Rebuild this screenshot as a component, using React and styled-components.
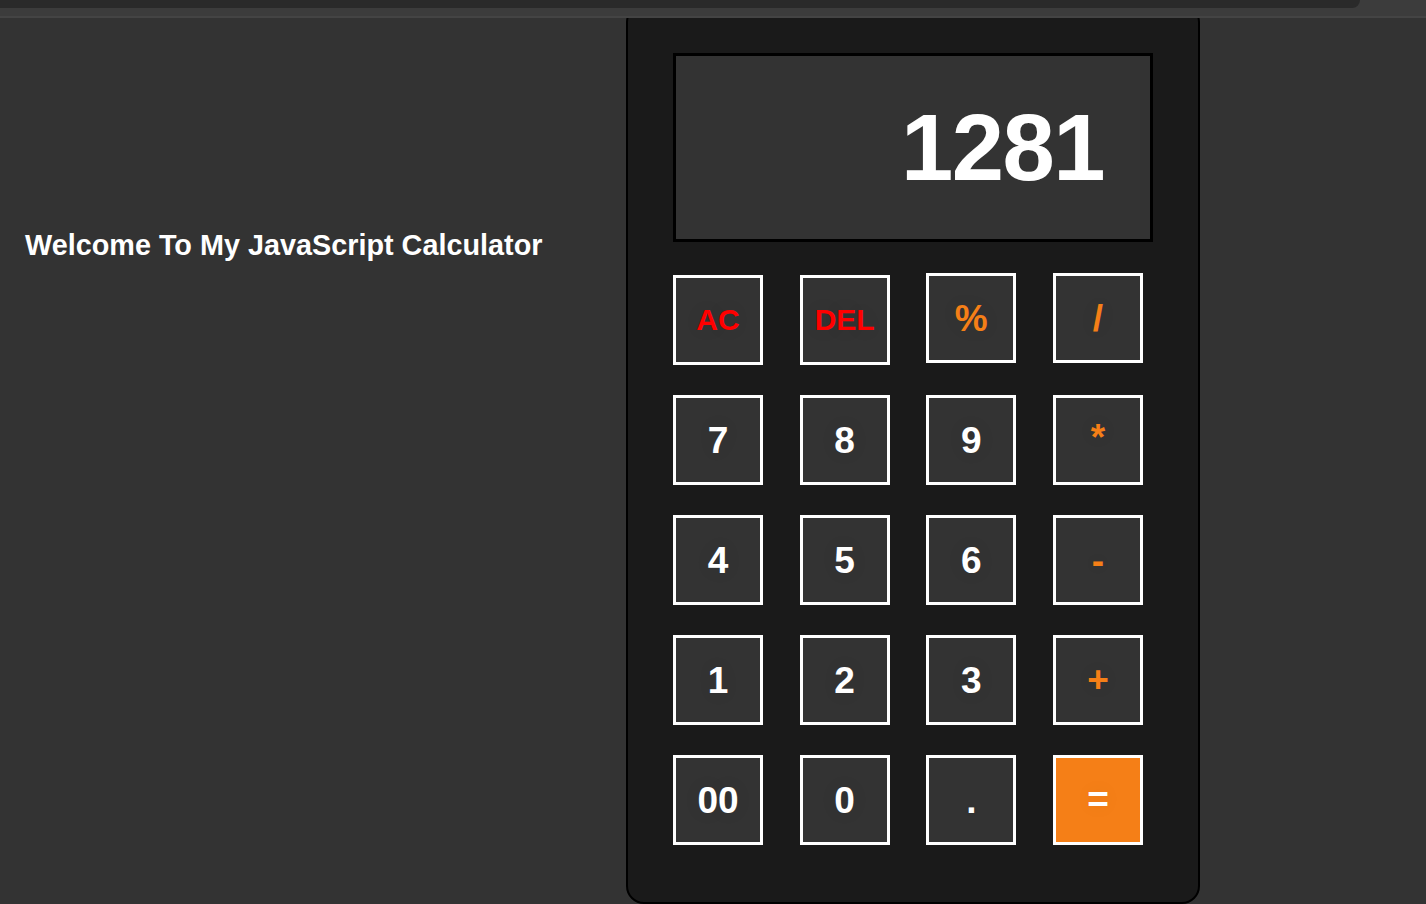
import React from "react";
import styled, { createGlobalStyle } from "styled-components";

const Global = createGlobalStyle`
  html, body { margin: 0; padding: 0; background: #333333; }
  body { font-family: "Liberation Sans", Arial, sans-serif; overflow: hidden; }
`;

const TopChrome = styled.div`
  position: fixed;
  top: 0;
  left: 0;
  right: 0;
  z-index: 10;
  display: flex;
  flex-direction: column;
`;

const TabStrip = styled.div`
  height: 8px;
  background: #3c3c3c;
  display: flex;
`;

const TabBar = styled.div`
  width: 1360px;
  height: 8px;
  background: #2a2a2a;
  border-bottom-right-radius: 8px;
`;

const ToolStrip = styled.div`
  height: 8px;
  background: #3c3c3c;
`;

const ToolEdge = styled.div`
  height: 2px;
  background: #444444;
`;

const Page = styled.div`
  display: flex;
  align-items: flex-start;
  height: 904px;
  box-sizing: border-box;
  padding-top: 6px;
`;

const Intro = styled.section`
  width: 626px;
  box-sizing: border-box;
  padding-left: 25px;
  padding-top: 222px;
`;

const Heading = styled.h1`
  margin: 0;
  color: #ffffff;
  font-size: 28.8px;
  font-weight: 700;
  line-height: 34px;
`;

const Calculator = styled.div`
  width: 480px;
  height: 849px;
  padding: 45px 45px 0 45px;
  background: #1a1a1a;
  border: 2px solid #000000;
  border-radius: 16px 16px 18px 18px;
  display: flex;
  flex-direction: column;
`;

const Display = styled.div`
  height: 183px;
  background: #333333;
  border: 3px solid #000000;
  display: flex;
  align-items: center;
  justify-content: flex-end;
  padding-right: 46px;
  color: #ffffff;
  font-size: 94px;
  font-weight: 700;
  letter-spacing: -1.5px;
  line-height: 1;
`;

const Keypad = styled.div`
  margin-top: 33px;
  width: 470px;
  display: grid;
  grid-template-columns: repeat(4, 90px);
  grid-auto-rows: 90px;
  justify-content: space-between;
  row-gap: 30px;
`;

const colors = {
  clear: "#ff0000",
  op: "#f57f17",
  num: "#ffffff",
  equal: "#ffffff",
};

const Key = styled.button`
  box-sizing: border-box;
  width: 90px;
  height: 90px;
  margin: 0;
  padding: 0;
  border: 3px solid #ffffff;
  background: ${(p) => (p.$kind === "equal" ? "#f57f17" : "#333333")};
  color: ${(p) => colors[p.$kind]};
  font-family: "Liberation Sans", Arial, sans-serif;
  font-weight: 700;
  font-size: ${(p) => (p.$kind === "clear" ? "30px" : "37px")};
  line-height: 1;
  display: flex;
  align-items: center;
  justify-content: center;
  transform: translateY(${(p) => (p.$raise ? "-2px" : "0")});
  text-shadow: 0 0 18px rgba(0, 0, 0, 0.08);
`;

const Glyph = styled.span`
  display: inline-block;
  transform: translateY(${(p) => p.$dy || 0}px);
`;

const keys = [
  { label: "AC", kind: "clear" },
  { label: "DEL", kind: "clear" },
  { label: "%", kind: "op", raise: true },
  { label: "/", kind: "op", raise: true },
  { label: "7", kind: "num" },
  { label: "8", kind: "num" },
  { label: "9", kind: "num" },
  { label: "*", kind: "op", dy: -3 },
  { label: "4", kind: "num" },
  { label: "5", kind: "num" },
  { label: "6", kind: "num" },
  { label: "-", kind: "op" },
  { label: "1", kind: "num" },
  { label: "2", kind: "num" },
  { label: "3", kind: "num" },
  { label: "+", kind: "op", dy: -1 },
  { label: "00", kind: "num" },
  { label: "0", kind: "num" },
  { label: ".", kind: "num" },
  { label: "=", kind: "equal", dy: -1 },
];

export default function App() {
  return (
    <>
      <Global />
      <TopChrome>
        <TabStrip>
          <TabBar />
        </TabStrip>
        <ToolStrip />
        <ToolEdge />
      </TopChrome>
      <Page>
        <Intro>
          <Heading>Welcome To My JavaScript Calculator</Heading>
        </Intro>
        <Calculator>
          <Display>1281</Display>
          <Keypad>
            {keys.map((k) => (
              <Key key={k.label} $kind={k.kind} $raise={k.raise}>
                <Glyph $dy={k.dy}>{k.label}</Glyph>
              </Key>
            ))}
          </Keypad>
        </Calculator>
      </Page>
    </>
  );
}
